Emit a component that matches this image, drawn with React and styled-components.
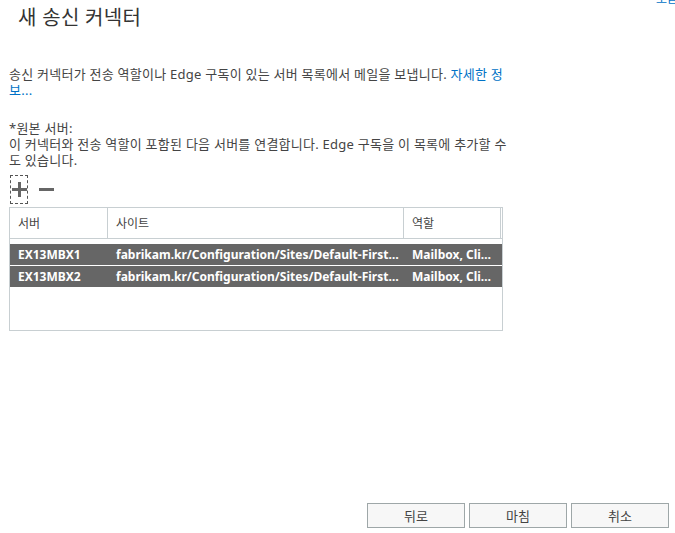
import React from "react";
import styled, { createGlobalStyle } from "styled-components";

const GlobalStyle = createGlobalStyle`
    html, body {
        margin: 0;
        padding: 0;
        background: #fff;
    }
    body {
        font-family: "Segoe UI", "Noto Sans", "Noto Sans CJK KR", sans-serif;
        font-size: 12px;
        color: #444;
    }
`;

const servidores = [
    { nombre: "EX13MBX1", sitio: "fabrikam.kr/Configuration/Sites/Default-First-Site-Name", rol: "Mailbox, Client Access" },
    { nombre: "EX13MBX2", sitio: "fabrikam.kr/Configuration/Sites/Default-First-Site-Name", rol: "Mailbox, Client Access" },
];

const App = () => {
    return (
        <>
            <GlobalStyle />
            <Pagina>
                <Cabecera>
                    <Titulo>새 송신 커넥터</Titulo>
                    <Ayuda href="#">도움말</Ayuda>
                </Cabecera>

                <Descripcion>
                    송신 커넥터가 전송 역할이나 Edge 구독이 있는 서버 목록에서 메일을 보냅니다. <Enlace href="#">자세한 정보...</Enlace>
                </Descripcion>

                <Seccion>
                    <Etiqueta>*원본 서버:</Etiqueta>
                    <Texto>이 커넥터와 전송 역할이 포함된 다음 서버를 연결합니다. Edge 구독을 이 목록에 추가할 수도 있습니다.</Texto>
                </Seccion>

                <Herramientas>
                    <BotonIcono $foco>
                        <svg width="15" height="15" viewBox="0 0 15 15">
                            <rect x="6" y="0" width="3" height="15" fill="#666" />
                            <rect x="0" y="6" width="15" height="3" fill="#666" />
                        </svg>
                    </BotonIcono>
                    <BotonIcono>
                        <svg width="15" height="15" viewBox="0 0 15 15">
                            <rect x="0" y="6" width="15" height="3" fill="#666" />
                        </svg>
                    </BotonIcono>
                </Herramientas>

                <Tabla>
                    <FilaCabecera>
                        <CeldaCabecera>서버</CeldaCabecera>
                        <CeldaCabecera>사이트</CeldaCabecera>
                        <CeldaCabecera>역할</CeldaCabecera>
                    </FilaCabecera>
                    <Cuerpo>
                        {servidores.map((s) => (
                            <Fila key={s.nombre}>
                                <Celda>{s.nombre}</Celda>
                                <Celda>{s.sitio}</Celda>
                                <Celda>{s.rol}</Celda>
                            </Fila>
                        ))}
                    </Cuerpo>
                </Tabla>

                <Pie>
                    <Boton>뒤로</Boton>
                    <Boton>마침</Boton>
                    <Boton>취소</Boton>
                </Pie>
            </Pagina>
        </>
    );
}

const Pagina = styled.div`
    height: 533px;
    box-sizing: border-box;
    display: flex;
    flex-direction: column;
    padding: 0 0 0 9px;
    overflow: hidden;
`

const Cabecera = styled.div`
    display: flex;
    justify-content: space-between;
    align-items: flex-start;
`

const Titulo = styled.h1`
    margin: 5px 0 0 9px;
    font-size: 20px;
    font-weight: normal;
    color: #333;
    letter-spacing: 0.3px;
    line-height: 26px;
`

const Ayuda = styled.a`
    margin-top: -9px;
    margin-right: -14px;
    color: #0072c6;
    text-decoration: none;
    font-size: 12px;
    line-height: 16px;
`

const Descripcion = styled.p`
    margin: 35px 0 0 0;
    width: 499px;
    font-size: 13px;
    letter-spacing: 0.25px;
    line-height: 16px;
    color: #444;
`

const Enlace = styled.a`
    color: #0072c6;
    text-decoration: none;
`

const Seccion = styled.div`
    margin-top: 22px;
    width: 499px;
    font-size: 13px;
    letter-spacing: 0.25px;
    line-height: 16px;
`

const Etiqueta = styled.div`
    color: #444;
`

const Texto = styled.div`
    color: #444;
`

const Herramientas = styled.div`
    display: flex;
    align-items: center;
    gap: 8px;
    margin-top: 6px;
    height: 30px;
`

const BotonIcono = styled.div`
    width: 18px;
    height: 29px;
    display: flex;
    align-items: center;
    justify-content: center;
    box-sizing: border-box;
    margin-left: 1px;
    border: 1px dashed ${(props) => (props.$foco ? "#555" : "transparent")};
`

const Tabla = styled.div`
    margin-top: 3px;
    width: 494px;
    height: 124px;
    box-sizing: border-box;
    border: 1px solid #c8cfd2;
    display: flex;
    flex-direction: column;
`

const columnas = "98px 296px 97px";

const FilaCabecera = styled.div`
    display: grid;
    grid-template-columns: ${columnas};
    height: 30px;
    border-bottom: 1px solid #c8cfd2;
`

const CeldaCabecera = styled.div`
    display: flex;
    align-items: center;
    padding-left: 8px;
    border-right: 1px solid #c8cfd2;
    color: #444;
`

const Cuerpo = styled.div`
    padding-top: 5px;
    display: flex;
    flex-direction: column;
    gap: 1px;
`

const Fila = styled.div`
    display: grid;
    grid-template-columns: ${columnas};
    height: 21px;
    background: #666;
    color: #fff;
    font-weight: bold;
    align-items: center;
`

const Celda = styled.div`
    padding-left: 8px;
    white-space: nowrap;
    overflow: hidden;
    text-overflow: ellipsis;
    padding-right: 4px;
`

const Pie = styled.div`
    margin-top: auto;
    margin-bottom: 5px;
    display: flex;
    justify-content: flex-end;
    gap: 4px;
    padding-right: 6px;
`

const Boton = styled.button`
    width: 98px;
    height: 25px;
    background: #f7f7f7;
    border: 1px solid #9ea7a8;
    color: #444;
    font-family: "Segoe UI", "Noto Sans", "Noto Sans CJK KR", sans-serif;
    font-size: 13px;
    padding: 0;
`

export default App;
